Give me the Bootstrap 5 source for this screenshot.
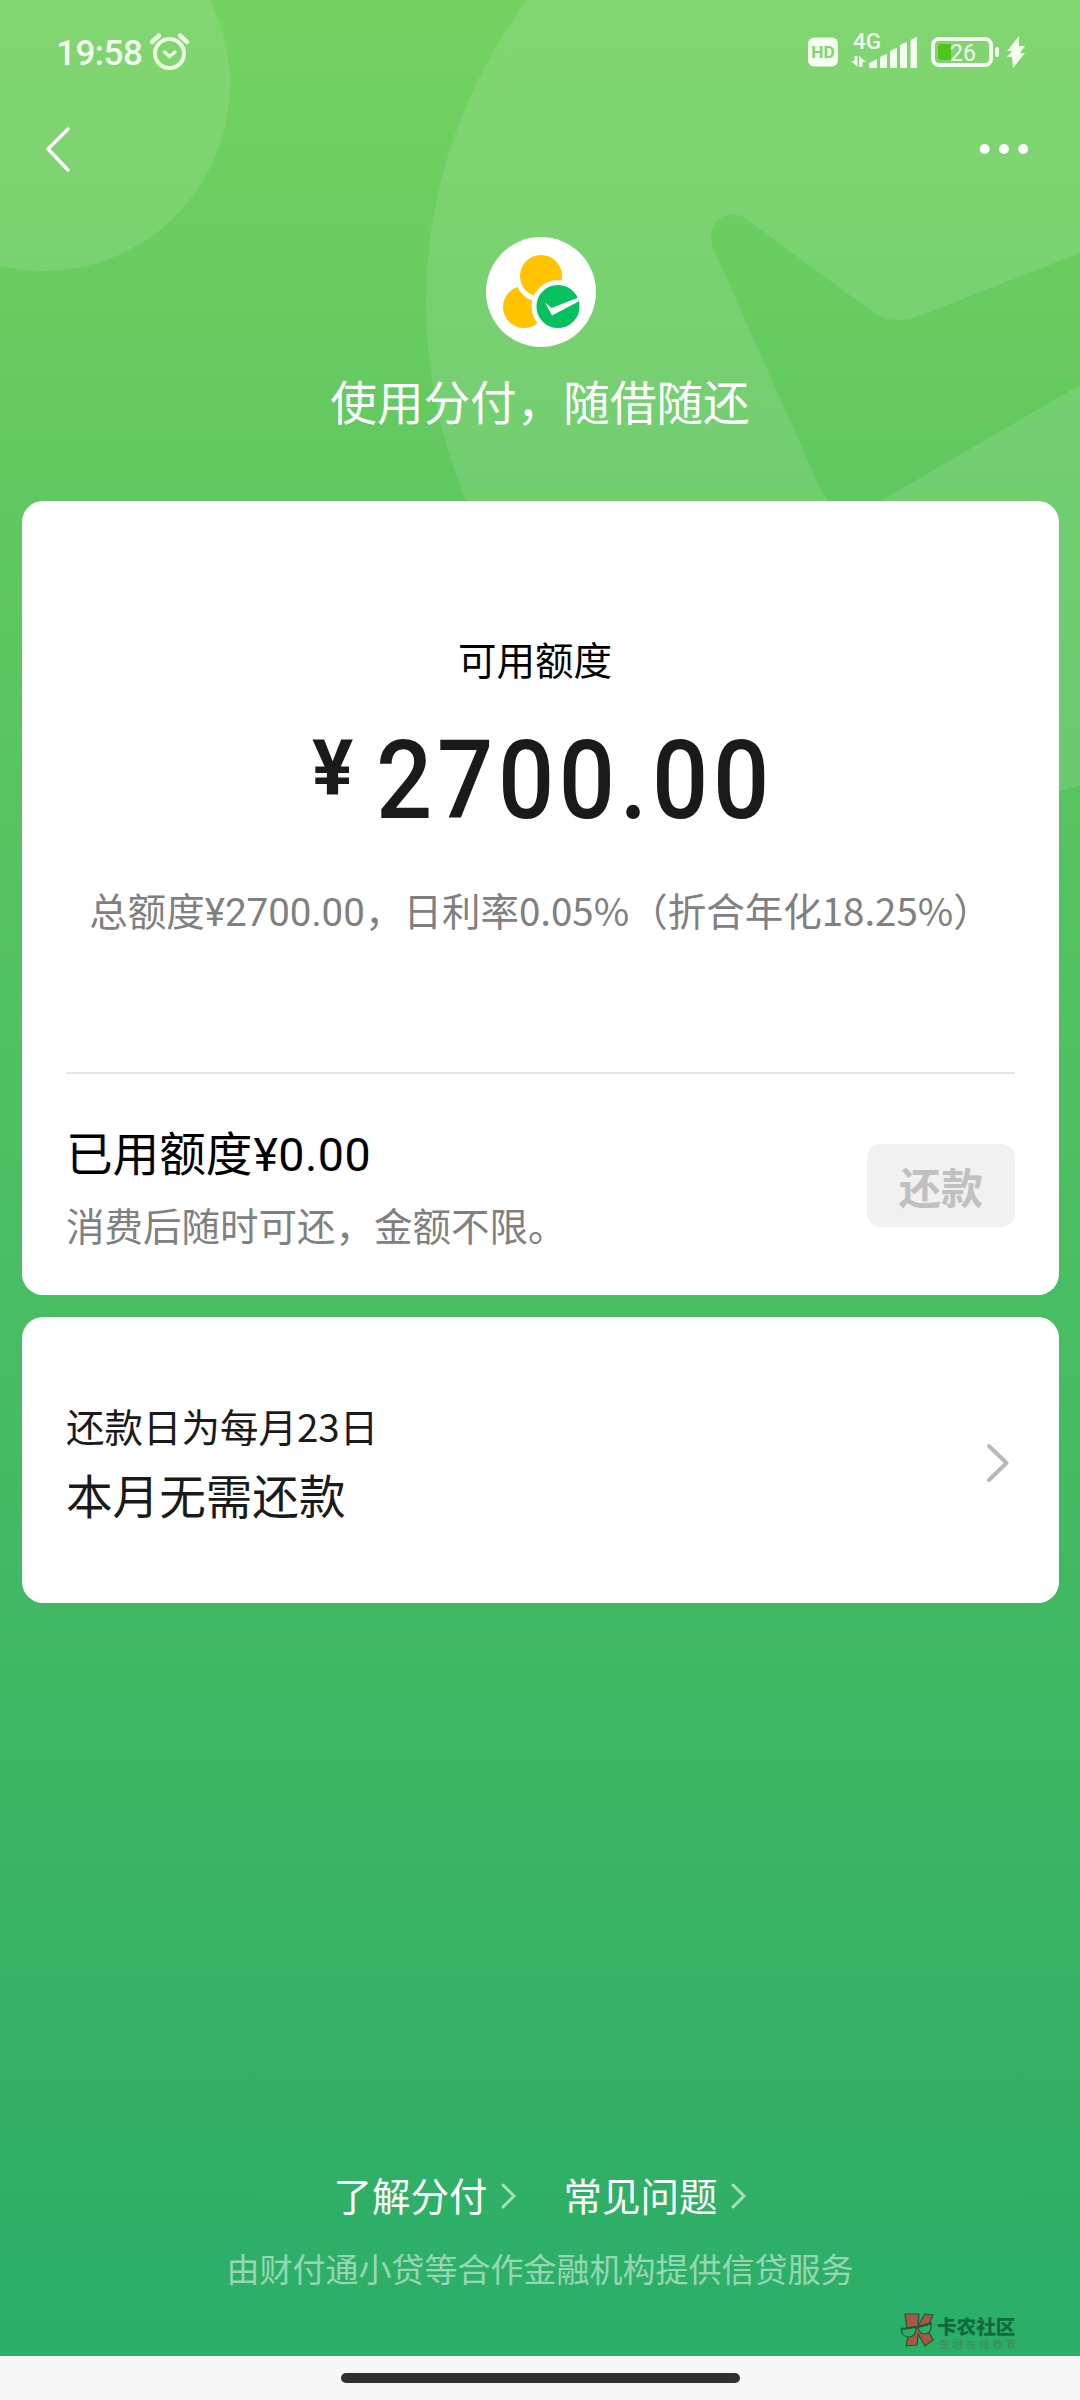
<!DOCTYPE html>
<html lang="zh-CN">
<head>
<meta charset="utf-8">
<meta name="viewport" content="width=device-width, initial-scale=1">
<title>分付</title>
<link href="https://cdn.jsdelivr.net/npm/bootstrap@5.3.0/dist/css/bootstrap.min.css" rel="stylesheet">
<style>
body{width:1080px;height:2400px;overflow:hidden;font-family:"Noto Sans CJK SC",sans-serif;color:#000;background:#f7f7f7}
.screen{height:2356px;background:linear-gradient(#74d260 0,#6acd60 270px,#60c860 500px,#49bd62 1300px,#35b265 2000px,#2aae68 2356px)}
.backdrop{left:0;top:0;z-index:0}
.layer{z-index:1}
.ui{font-family:Roboto,"Noto Sans CJK SC",sans-serif}
.statusbar{height:104px}
.clock{font-size:35px;font-weight:500;line-height:40px;margin:34px 0 0 56px;color:#f4fff0;letter-spacing:-.5px}
.alarm{margin-left:6px}
.navrow{height:90px}
.hero{height:307px;padding-top:42px}
.hero h1{font-size:46.6px;line-height:60px;font-weight:400;margin:22px 0 0;color:#fff}
.panel{margin:0 21px 0 22px;border-radius:21px;background:#fff;padding:0 44px}
.panel-main{height:794px}
.t38{font-size:38.5px;line-height:50px}
.t46{font-size:46.6px;line-height:60px}
.quota{height:573px;border-bottom:2px solid #e6e6e6;padding-top:132px}
.quota-label{padding-right:11px}
.amount{font-size:110px;line-height:120px;font-weight:500;color:#1a1a1a;margin-top:38px}
.yen{font-size:77px;line-height:84px;font-weight:700;width:64px;margin:6px 0 0 246px;text-align:left}
.digits{transform:scaleX(.9);transform-origin:left;letter-spacing:5.200px}
.gray{color:#808080}
.rate{margin:43px -20px 0;white-space:nowrap}
.used{padding-top:47px}
.used-num{letter-spacing:.5px;margin-left:1px}
.used-note{margin-top:14px}
.repay{width:148px;height:83px;border-radius:14px;background:#f1f1f1;color:#c0c0c0;font-size:42px;font-weight:700;line-height:83px;padding:0;border:0;margin-top:23px}
.panel-due{height:286px;margin-top:22px;color:#1a1a1a}
.due-text{padding-top:83px}
.due-state{margin-top:14px}
.due-arrow{margin-top:116px}
.foot{padding-top:566px;color:#fff}
.foot-arrow{margin:4px 0 0 13px}
.foot-next{margin-left:47px}
.disc{font-size:33px;line-height:44px;color:rgba(255,255,255,.5);margin-top:27px}
.mark-wrap{left:899px;top:2311px;z-index:2}
.mark-a{font-size:19.6px;line-height:22px;font-weight:900;color:#0f6b3c;white-space:nowrap}
.mark-b{font-size:10.5px;line-height:13px;letter-spacing:2.9px;color:#408a5a;white-space:nowrap;margin:0 0 0 2px}
.homebar{height:44px;padding-top:17px;background:#f7f7f7}
.homebar div{width:399px;height:10px;border-radius:5px;background:#303030}
</style>
<script src="https://cdn.jsdelivr.net/npm/bootstrap@5.3.0/dist/js/bootstrap.bundle.min.js"></script>
</head>
<body class="m-0 position-relative">
<main class="screen position-relative overflow-hidden">
  <svg class="backdrop position-absolute" width="1080" height="800">
    <circle cx="43" cy="84" r="187" fill="#fff" fill-opacity=".105"/>
    <path fill="#fff" fill-opacity=".105" fill-rule="evenodd" d="M931-202a505 505 0 1 0 0 1010a505 505 0 1 0 0-1010ZM743 217Q729 211 718 220Q707 231 713 248L821 490Q832 513 858 508Q870 507 884 499L1080 385L1440 210V120L1080 253L917 317Q896 324 877 315Z"/>
  </svg>
  <header class="layer position-relative">
    <div class="statusbar d-flex justify-content-between ui">
      <div class="d-flex align-items-start">
        <div class="clock">19:58</div>
        <svg class="alarm" width="44" height="76" viewBox="149 0 44 76" fill="none" stroke="#e9ffdf" stroke-linecap="round"><circle cx="170.500" cy="53.500" r="14.500" stroke-width="4"/><path d="M153 42l7-6.500M188 42l-7-6.500" stroke-width="4.500"/><path d="M165.500 52l5 4.500 5.500-4.500" stroke-width="3.500"/></svg>
      </div>
      <svg width="280" height="104" viewBox="800 0 280 104" fill="#f3ffef">
        <rect x="808" y="37.500" width="30" height="29" rx="6"/>
        <text x="811.300" y="58" font-size="16.500" font-weight="700" fill="#7fd56f" textLength="23.500" lengthAdjust="spacingAndGlyphs">HD</text>
        <text x="853" y="48.500" font-size="21.500" font-weight="500" textLength="28" lengthAdjust="spacingAndGlyphs">4G</text>
        <path d="M851 61h3.500v-5h3v11ZM859 67v-11l7 6h-3.500v5M869 68v-5l8-4v9ZM880 68V58q0-2 7-4v14ZM890 68V52q0-2 7-4v20ZM900 68V46q0-2 7-4v26ZM910.500 68V41q0-2 6.500-4v31Z"/>
        <rect x="933" y="39" width="58" height="26" rx="6" fill="none" stroke="#f3ffef" stroke-width="4"/>
        <path d="M941 44h10v16h-10q-3 0-3-3V47q0-3 3-3Z" fill="#53c51a"/>
        <rect x="995" y="47" width="4" height="10" rx="2"/>
        <text x="950" y="61" font-size="23" font-weight="400">26</text>
        <path d="M1019 36L1007 51h5l-5 6h5l1 11 12-15h-5l5-7h-6Z"/>
      </svg>
    </div>
    <div class="navrow d-flex justify-content-between">
      <svg width="90" height="90" viewBox="0 104 90 90" fill="none" stroke="#fff" stroke-width="3.500" stroke-linecap="round" stroke-linejoin="round"><path d="M68 129L48 149l20 21"/></svg>
      <svg width="110" height="90" viewBox="970 104 110 90" fill="#fff"><circle cx="984.700" cy="149" r="5"/><circle cx="1004" cy="149" r="5"/><circle cx="1023.200" cy="149" r="5"/></svg>
    </div>
  </header>
  <section class="hero layer position-relative text-center">
    <svg class="d-block mx-auto" width="112" height="112" viewBox="484 236 112 112">
      <circle cx="541" cy="292" r="55" fill="#fff"/>
      <circle cx="524" cy="307" r="21" fill="#ffc300"/>
      <circle cx="541" cy="276" r="23.500" fill="#ffc300" stroke="#fff" stroke-width="5"/>
      <circle cx="558" cy="306.500" r="24" fill="#07c160" stroke="#fff" stroke-width="5"/>
      <path d="M545 302.500l6.500 5.500 27-10.500v4L552 315.500Z" fill="#fff"/>
    </svg>
    <h1>使用分付，随借随还</h1>
  </section>
  <section class="panel panel-main layer position-relative">
    <div class="quota text-center">
      <div class="t38 quota-label">可用额度</div>
      <div class="amount ui d-flex align-items-start"><span class="yen">¥</span><span class="digits">2700.00</span></div>
      <div class="t38 gray rate">总额度<span class="ui">¥2700.00</span>，日利率0.05%（折合年化18.25%）</div>
    </div>
    <div class="used d-flex justify-content-between align-items-start">
      <div>
        <div class="t46">已用额度<span class="ui used-num">¥0.00</span></div>
        <div class="t38 gray used-note">消费后随时可还，金额不限。</div>
      </div>
      <button class="btn repay" type="button">还款</button>
    </div>
  </section>
  <section class="panel panel-due layer position-relative d-flex justify-content-between">
    <div class="due-text">
      <div class="t38">还款日为每月23日</div>
      <div class="t46 due-state">本月无需还款</div>
    </div>
    <svg class="due-arrow" width="40" height="60" viewBox="975 1433 40 60" fill="none" stroke="#b8b8b8" stroke-width="4" stroke-linecap="round" stroke-linejoin="round"><path d="M989 1446l17.500 17L989 1480"/></svg>
  </section>
  <footer class="foot layer position-relative text-center">
    <div class="d-flex justify-content-center">
      <div class="t38 d-flex align-items-center">了解分付<svg class="foot-arrow" width="16" height="30" fill="none" stroke="#a7dfb8" stroke-width="3" stroke-linecap="round"><path d="M2 4l11 11L2 26"/></svg></div>
      <div class="t38 d-flex align-items-center foot-next">常见问题<svg class="foot-arrow" width="16" height="30" fill="none" stroke="#a7dfb8" stroke-width="3" stroke-linecap="round"><path d="M2 4l11 11L2 26"/></svg></div>
    </div>
    <div class="disc">由财付通小贷等合作金融机构提供信贷服务</div>
  </footer>
  <div class="mark-wrap position-absolute d-flex">
    <svg width="38" height="38" viewBox="899 2311 38 38" stroke="#1b5a38" stroke-width="1.200" stroke-linejoin="round"><path fill="#ad5544" d="M905 2314h14l-1 12 7-12 8 1-6 13 6 12-8 6-7-12-1 11-11 1 2-9Z"/><path fill="#2caf68" d="M901 2329l15-2q0 10-7 10-7 0-8-8ZM918 2327l13-3q1 9-6 10-6 0-7-7Z"/><path d="M901 2329l15-2M916 2328l2-1M918 2327l14-4" fill="none" stroke-width="2"/></svg>
    <div class="pt-1"><div class="mark-a">卡农社区</div><div class="mark-b">金融在线教育</div></div>
  </div>
</main>
<div class="homebar"><div class="mx-auto"></div></div>
</body>
</html>
